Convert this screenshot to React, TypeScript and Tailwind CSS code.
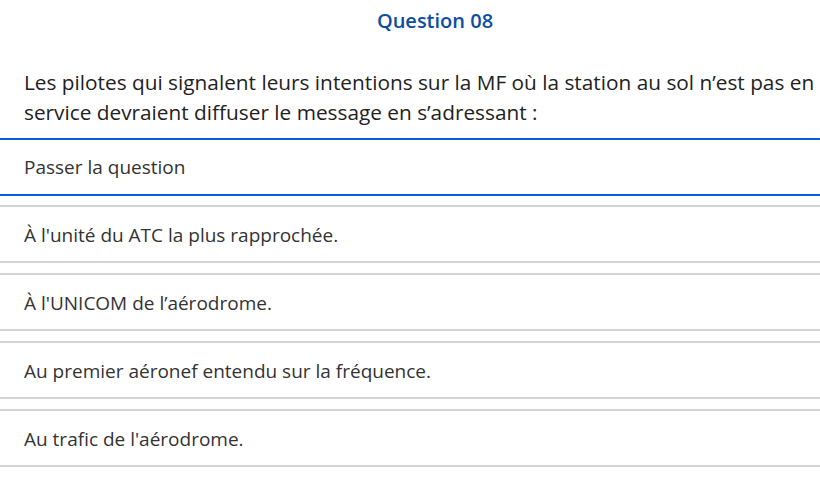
const options = [
  "À l'unité du ATC la plus rapprochée.",
  "À l'UNICOM de l’aérodrome.",
  "Au premier aéronef entendu sur la fréquence.",
  "Au trafic de l'aérodrome.",
];

export default function App() {
  return (
    <div className="h-[482px] w-[820px] overflow-hidden bg-white font-['Open_Sans',sans-serif] text-[#333]">
      <h2 className="flex h-[42px] items-center justify-center pl-[50px] text-[20px] font-semibold text-[#0b4ea2]">
        Question 08
      </h2>
      <p className="mt-[25px] pl-6 pr-[3px] pb-[11px] text-[20.8px] leading-[30px] text-[#222]">
        Les pilotes qui signalent leurs intentions sur la MF où la station au sol n’est pas en
        service devraient diffuser le message en s’adressant :
      </p>
      <button
        type="button"
        className="flex h-[58px] w-full items-center border-y-2 border-[#0a5ce0] px-6 text-left text-[19px]"
      >
        Passer la question
      </button>
      <ul className="mt-[9px] flex flex-col gap-[10px]">
        {options.map((opt) => (
          <li key={opt}>
            <button
              type="button"
              className="flex h-[58px] w-full items-center border-y-2 border-[#d3d3d3] px-6 pt-[3px] text-left text-[19px]"
            >
              {opt}
            </button>
          </li>
        ))}
      </ul>
    </div>
  );
}
